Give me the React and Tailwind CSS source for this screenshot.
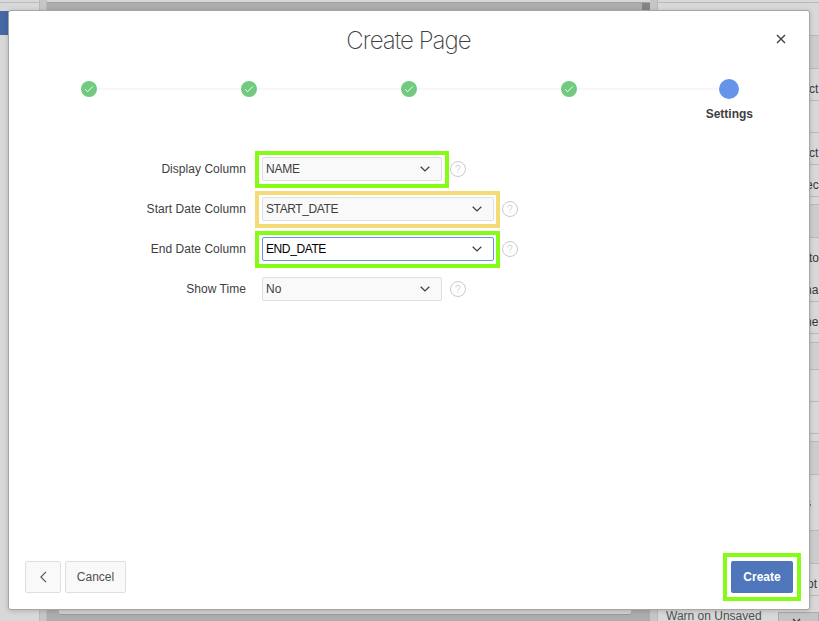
import React from 'react';

const PROPERTY_ROWS = [
  { h: 'h-[33px]', tone: 'bg-[#d8d8d8]' },
  { h: 'h-[33px]', tone: 'bg-[#cdcdcd]' },
  { h: 'h-8', tone: 'bg-[#d8d8d8]', text: 'ct', pad: 'pt-[13px] pl-[151px]' },
  { h: 'h-8', tone: 'bg-[#d8d8d8]' },
  { h: 'h-8', tone: 'bg-[#d8d8d8]', text: 'ct', pad: 'pt-[13px] pl-[151px]' },
  { h: 'h-8', tone: 'bg-[#d8d8d8]', text: 'ec', pad: 'pt-[13px] pl-[148px]' },
  { h: 'h-2', tone: 'bg-[#d8d8d8]' },
  { h: 'h-[33px]', tone: 'bg-[#cdcdcd]' },
  { h: 'h-8', tone: 'bg-[#d8d8d8]', text: 'to', pad: 'pt-[13px] pl-[151px]', open: true },
  { h: 'h-8', tone: 'bg-[#d8d8d8]', text: 'na', pad: 'pt-[13px] pl-[147px]' },
  { h: 'h-8', tone: 'bg-[#d8d8d8]', text: 'ne', pad: 'pt-[13px] pl-[147px]' },
  { h: 'h-[9px]', tone: 'bg-[#d8d8d8]' },
  { h: 'h-[27px]', tone: 'bg-[#d0d0d0]' },
  { h: 'h-8', tone: 'bg-[#d8d8d8]' },
  { h: 'h-8', tone: 'bg-[#d8d8d8]' },
  { h: 'h-2', tone: 'bg-[#d8d8d8]' },
  { h: 'h-[33px]', tone: 'bg-[#cdcdcd]' },
  { h: 'h-14', tone: 'bg-[#d8d8d8]', text: 's', pad: 'pt-[21px] pl-[147px]' },
  { h: 'h-[33px]', tone: 'bg-[#cdcdcd]' },
  { h: 'h-8', tone: 'bg-[#d8d8d8]', text: 'ot', pad: 'pt-[13px] pl-[149px]' },
];

const STEPS = [0, 1, 2, 3];

const FIELDS = [
  { label: 'Display Column', value: 'NAME', frame: 'border-[#86fc16]', width: 'w-[194px]', box: 'border-[#dfdfdf] bg-[#f9f9f9] text-[#404040]', help: 'ml-px', tracking: 'tracking-[-0.25px]' },
  { label: 'Start Date Column', value: 'START_DATE', frame: 'border-[#f5db78]', width: 'w-[245px]', box: 'border-[#dfdfdf] bg-[#f9f9f9] text-[#404040]', help: 'ml-[2px]', tracking: 'tracking-[-0.4px]' },
  { label: 'End Date Column', value: 'END_DATE', frame: 'border-[#86fc16]', width: 'w-[245px]', box: 'border-[#6394e8] bg-white text-black', help: 'ml-[2px]', tracking: 'tracking-[-0.4px]' },
  { label: 'Show Time', value: 'No', frame: 'border-transparent', width: 'w-[194px]', box: 'border-[#dfdfdf] bg-[#f9f9f9] text-[#404040]', help: 'ml-px', tracking: 'tracking-normal' },
];

function Check() {
  return (
    <span className="flex size-4 shrink-0 items-center justify-center rounded-full bg-[#70cb7e]">
      <svg width="16" height="16" viewBox="0 0 16 16" fill="none" stroke="white" strokeWidth="0.9">
        <path d="M4.2 8.2 6.7 10.7 11.8 5.4" />
      </svg>
    </span>
  );
}

function Help() {
  return (
    <svg width="16" height="16" viewBox="0 0 16 16" fill="none" stroke="#cbcbcb" className="shrink-0">
      <circle cx="8" cy="8" r="7.5" />
      <path d="M6 6.3C6 5 6.8 4.3 8 4.3s2 .7 2 1.8c0 1.5-2 1.6-2 3.5" />
      <path d="M8 10.8v1.2" />
    </svg>
  );
}

function Workspace() {
  return (
    <div className="flex h-full">
      <div className="w-[39px] shrink-0 bg-[#d8d8d8]">
        <div className="h-[3px] border-b border-[#bdbdbd]" />
        <div className="h-2" />
        <div className="h-6 w-8 bg-[#4668a4]" />
      </div>
      <div className="w-2 shrink-0 border-x border-[#b9b9b9] bg-[#c6c6c6]" />
      <div className="flex w-[603px] shrink-0 flex-col bg-[#adadad]">
        <div className="h-[3px] border-b border-[#a3a3a3] bg-[#d8d8d8]" />
        <div className="h-[7px] w-2 self-end bg-[#858585]" />
        <div className="mt-auto mb-[6px] ml-3 h-8 w-[572px] rounded-xs border-b border-[#999] bg-[#d2d2d2]" />
      </div>
      <div className="w-2 shrink-0 border-r border-[#b9b9b9] bg-[#c6c6c6]" />
      <div className="flex min-w-0 grow flex-col bg-[#d8d8d8]">
        <div className="h-[3px] shrink-0 border-b border-[#b9b9b9]" />
        {PROPERTY_ROWS.map((row, i) => (
          <div
            key={i}
            className={`shrink-0 border-b text-[12px] leading-[14px] text-[#383838] ${row.open ? 'border-transparent' : 'border-[#b9b9b9]'} ${row.h} ${row.tone} ${row.pad || ''}`}
          >
            {row.text}
          </div>
        ))}
        <div className="flex h-[22px] shrink-0 justify-between">
          <span className="pt-[13px] pl-2 text-[12px] leading-[14px] whitespace-nowrap text-[#505050]">Warn on Unsaved</span>
          <div className="mt-4 flex h-8 w-[41px] justify-center border border-[#acacac] bg-[#c4c4c4] pt-1">
            <svg width="9" height="9" viewBox="0 0 9 9" fill="none" stroke="#444" strokeWidth="1.5" className="-ml-1">
              <path d="m1 2 3.5 3.5L8 2" />
            </svg>
          </div>
        </div>
      </div>
    </div>
  );
}

export default function App() {
  return (
    <div className="relative h-[621px] w-[819px] overflow-hidden bg-[#adadad] font-['Liberation_Sans',Arial,sans-serif] text-[12px]">
      <Workspace />
      <div className="absolute top-[10px] left-2 flex h-[600px] w-[802px] flex-col rounded-[3px] border border-[#a6a6a6] bg-white shadow-[0_1px_5px_rgba(0,0,0,0.18)]">
        <header className="flex h-[60px] shrink-0 items-start">
          <span className="w-[43px]" />
          <h1 className="grow pt-[15px] text-center font-[Inter,sans-serif] text-[24px] leading-[30px] font-[200] tracking-[-0.95px] text-[#404040]">Create Page</h1>
          <button className="mt-[22px] mr-[22px] ml-[10px] flex size-[12px] items-center justify-center">
            <svg width="12" height="12" viewBox="0 0 12 12" fill="none" stroke="#404040" strokeWidth="1.4">
              <path d="m2 2 8 8M10 2l-8 8" />
            </svg>
          </button>
        </header>

        <div className="flex h-9 items-center pr-[70px] pl-[72px]">
          {STEPS.map((s) => (
            <React.Fragment key={s}>
              <Check />
              <span className={`h-[2px] shrink-0 bg-[#f7f7f7] ${s === 3 ? 'w-[142px]' : 'w-36'}`} />
            </React.Fragment>
          ))}
          <span className="size-5 shrink-0 rounded-full bg-[#6495e8]" />
        </div>
        <div className="flex h-11 justify-end pr-14 font-bold text-[#404040]">
          <span className="leading-[14px]">Settings</span>
        </div>

        <div className="flex flex-col gap-[3px]">
          {FIELDS.map((f) => (
            <div key={f.label} className="flex h-[37px] items-start">
              <label className="w-[237px] shrink-0 pt-[11px] text-right leading-[14px] tracking-[0.04px] text-[#404040]">{f.label}</label>
              <div className={`ml-[9px] h-[37px] shrink-0 border-4 p-[2px] pl-[3px] ${f.frame} ${f.width}`}>
                <div className={`flex h-6 items-center justify-between rounded-[2px] border pr-[11px] pl-[3px] ${f.width === 'w-[194px]' ? 'w-[180px]' : 'w-[232px]'} ${f.box}`}>
                  <span className={`leading-[14px] ${f.tracking}`}>{f.value}</span>
                  <svg width="10" height="6" viewBox="0 0 10 6" fill="none" stroke="#404040" strokeWidth="1.3">
                    <path d="m.7.7 4.3 4.2L9.3.7" />
                  </svg>
                </div>
              </div>
              <span className={`flex pt-[10px] ${f.help}`}><Help /></span>
            </div>
          ))}
        </div>

        <footer className="mt-auto flex h-[56px] items-start gap-1 pl-4">
          <button className="mt-2 flex h-8 w-9 items-center justify-center rounded-[2px] border border-[#dfdfdf] bg-[#f9f9f9]">
            <svg width="7" height="12" viewBox="0 0 7 12" fill="none" stroke="#505050" strokeWidth="1.1">
              <path d="M6 .8.9 6 6 11.2" />
            </svg>
          </button>
          <button className="mt-2 h-8 w-[61px] rounded-[2px] border border-[#dfdfdf] bg-[#f9f9f9] text-[#505050]">Cancel</button>
          <div className="mr-2 ml-auto h-12 w-[78px] border-4 border-[#86fc16] p-1">
            <button className="h-8 w-[62px] rounded-[2px] bg-[#4f76bb] font-bold text-white">Create</button>
          </div>
        </footer>
      </div>
    </div>
  );
}
